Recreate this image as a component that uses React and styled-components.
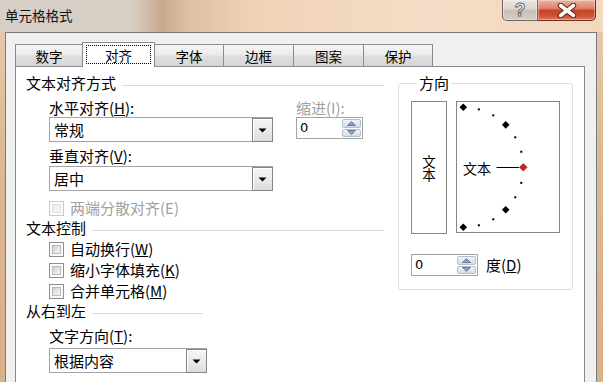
import React from 'react';
import styled, { createGlobalStyle } from 'styled-components';

const Global = createGlobalStyle`
  html, body { margin: 0; padding: 0; background: #e4c4a4; }
  body { font-family: "Noto Sans CJK SC", "Noto Sans", sans-serif; color: #000; }
  * { box-sizing: border-box; }
`;

const Frame = styled.div`
  width: 603px;
  height: 382px;
  overflow: hidden;
  display: flex;
  flex-direction: column;
  background: linear-gradient(180deg, #e8cdb1 0%, #ddb893 40%, #d8b08a 100%);
`;

const TitleBar = styled.div`
  height: 32px;
  flex: none;
  display: flex;
  justify-content: space-between;
  align-items: flex-start;
  background: linear-gradient(90deg, #d6cfc8 0%, #d8cec4 22%, #c9a98b 27%, #dcc0a2 31%, #efd3b8 42%, #f5dcc6 70%, #f3d8bf 100%);
`;

const Title = styled.div`
  padding: 6px 0 0 5px;
  font-size: 13.5px;
  line-height: 18px;
  color: #111;
`;

const Caption = styled.div`
  display: flex;
  margin-right: 7px;
`;

const CapButton = styled.div`
  width: ${p => p.$w}px;
  height: 21px;
  display: flex;
  align-items: center;
  justify-content: center;
  border: 1px solid ${p => (p.$close ? '#6b3224' : '#6e665e')};
  border-top: none;
  border-left: ${p => (p.$close ? 'none' : '1px solid #6e665e')};
  border-radius: ${p => (p.$close ? '0 0 5px 0' : '0 0 0 5px')};
  background: ${p =>
    p.$close
      ? 'linear-gradient(180deg, #eab4a0 0%, #de8266 42%, #c8432a 52%, #cf5436 80%, #e07a58 100%)'
      : 'linear-gradient(180deg, #ece6e0 0%, #ded6ce 45%, #cbc0b5 52%, #d6ccc2 100%)'};
  box-shadow: inset 0 0 0 1px rgba(255, 255, 255, 0.35);
`;

const HelpGlyph = styled.span`
  font-family: "Liberation Sans", Arial, sans-serif;
  font-weight: bold;
  font-size: 18px;
  line-height: 18px;
  color: #fff;
  -webkit-text-stroke: 1px #6a6a6a;
`;

const Dialog = styled.div`
  flex: 1;
  min-height: 0;
  margin: 0 6px 0 5px;
  border: 1px solid #7b7b7b;
  border-bottom: none;
  background: #f0f0f0;
  padding: 9px 11px 0 9px;
  display: flex;
  flex-direction: column;
`;

const TabStrip = styled.div`
  display: flex;
  align-items: flex-end;
  height: 24px;
  flex: none;
  position: relative;
  z-index: 1;
`;

const Tab = styled.div`
  width: ${p => p.$w}px;
  height: ${p => (p.$active ? 25 : 22)}px;
  margin-left: ${p => (p.$first ? 0 : -1)}px;
  margin-bottom: ${p => (p.$active ? -1 : 0)}px;
  position: relative;
  z-index: ${p => (p.$active ? 2 : 1)};
  border: 1px solid #898c95;
  border-bottom: none;
  background: ${p =>
    p.$active ? '#ffffff' : 'linear-gradient(180deg, #f4f4f4 0%, #ececec 45%, #dedede 55%, #d6d6d6 100%)'};
  display: flex;
  justify-content: center;
  align-items: ${p => (p.$active ? 'flex-start' : 'center')};
  font-size: 13.5px;
  line-height: 18px;
`;

const FocusRing = styled.span`
  margin: 2px 3px 0;
  flex: 1;
  height: 19px;
  border: 1px dotted #000;
  display: flex;
  justify-content: center;
  align-items: center;
`;

const Panel = styled.div`
  flex: 1;
  border: 1px solid #898c95;
  border-bottom: none;
  background: #ffffff;
  padding: 7px 0 0 10px;
  display: flex;
  align-items: flex-start;
`;

const LeftCol = styled.div`
  width: 372px;
  padding-right: 14px;
  display: flex;
  flex-direction: column;
`;

const Heading = styled.div`
  display: flex;
  align-items: flex-start;
  gap: 6px;
  height: 18px;
  font-size: 15px;
  line-height: 18px;
  margin-top: ${p => p.$mt || 0}px;
`;

const Rule = styled.span`
  margin-top: 11px;
  height: 1px;
  background: #dadada;
  flex: ${p => (p.$w ? `0 0 ${p.$w}px` : '1')};
`;

const AlignRow = styled.div`
  display: flex;
  gap: 23px;
  margin: 7px 0 0 23px;
`;

const FieldCol = styled.div`
  display: flex;
  flex-direction: column;
`;

const Label = styled.div`
  font-size: 15px;
  line-height: 18px;
  height: 18px;
  white-space: nowrap;
  color: ${p => (p.$disabled ? '#a0a0a0' : '#000')};
  margin-top: ${p => p.$mt || 0}px;
`;

const Combo = styled.div`
  width: ${p => p.$w}px;
  height: 25px;
  margin-top: ${p => p.$mt || 0}px;
  border: 1px solid #a4a4a4;
  background: #fff;
  display: flex;
  align-items: stretch;
`;

const ComboText = styled.div`
  flex: 1;
  padding-left: 4px;
  font-size: 15px;
  line-height: 23px;
`;

const DropButton = styled.div`
  width: 21px;
  margin: 0 -1px -1px 0;
  border: 1px solid #858585;
  background: linear-gradient(180deg, #f5f5f5 0%, #ebebeb 50%, #dcdcdc 100%);
  box-shadow: inset 1px 1px 0 #fff;
  display: flex;
  align-items: center;
  justify-content: center;
`;

const Spin = styled.div`
  width: 67px;
  height: 22px;
  border: 1px solid #a4a4a4;
  background: #fff;
  display: flex;
`;

const SpinText = styled.div`
  flex: 1;
  padding-left: 3px;
  font-family: "DejaVu Sans", sans-serif;
  font-size: 13px;
  line-height: 20px;
`;

const SpinButtons = styled.div`
  width: 20px;
  padding: 1px 1px 1px 0;
  display: flex;
  flex-direction: column;
  gap: 1px;
`;

const SpinHalf = styled.div`
  flex: 1;
  border: 1px solid #b4c0cf;
  border-radius: 2px;
  background: linear-gradient(180deg, #f2f5f9 0%, #e1e8f1 50%, #d3dce8 100%);
  display: flex;
  align-items: center;
  justify-content: center;
`;

const CheckRow = styled.div`
  display: flex;
  align-items: center;
  gap: 6px;
  height: 18px;
  margin: ${p => p.$mt || 0}px 0 0 23px;
  font-size: 15px;
  line-height: 18px;
  color: ${p => (p.$disabled ? '#a0a0a0' : '#000')};
`;

const CheckText = styled.span`
  white-space: nowrap;
`;

const Box = styled.span`
  width: 15px;
  height: 15px;
  flex: none;
  border: 1px solid ${p => (p.$disabled ? '#c9c9c9' : '#8e8f8f')};
  background: #fbfbfb;
  padding: 2px;
  display: flex;
  &::after {
    content: '';
    flex: 1;
    border: 1px solid ${p => (p.$disabled ? '#e2e2e2' : '#b9b9b9')};
    background: ${p =>
      p.$disabled
        ? 'linear-gradient(135deg, #ececec 0%, #f7f7f7 100%)'
        : 'linear-gradient(135deg, #cfcfcf 0%, #e9e9e9 60%, #f6f6f6 100%)'};
  }
`;

const Group = styled.fieldset`
  margin: 0;
  width: 175px;
  border: 1px solid #d5dfe5;
  border-radius: 3px;
  padding: 9px 0 13px 12px;
  display: flex;
  flex-direction: column;
  gap: 20px;
`;

const Legend = styled.legend`
  margin-left: 6px;
  padding: 0 2px;
  font-size: 15px;
  line-height: 18px;
`;

const OrientRow = styled.div`
  display: flex;
  gap: 9px;
  align-items: flex-start;
`;

const VerticalBox = styled.div`
  width: 36px;
  height: 133px;
  border: 1px solid #858585;
  display: flex;
  align-items: center;
  justify-content: center;
`;

const VerticalText = styled.span`
  writing-mode: vertical-rl;
  font-size: 13.5px;
  line-height: 16px;
  margin-top: 2px;
`;

const DialBox = styled.div`
  width: 104px;
  height: 132px;
  border: 1px solid #858585;
  position: relative;
`;

const DialSvg = styled.svg`
  position: absolute;
  inset: 0;
`;

const DialText = styled.span`
  position: absolute;
  left: 6px;
  top: 57px;
  font-size: 14px;
  line-height: 18px;
`;

const DegreeRow = styled.div`
  display: flex;
  align-items: center;
  gap: 8px;
`;

const Triangle = ({ down = true, color = '#000' }) => (
  <svg width="9" height="5" viewBox="0 0 9 5">
    <polygon points={down ? '0.5,0.5 8.5,0.5 4.5,4.5' : '0.5,4.5 8.5,4.5 4.5,0.5'} fill={color} />
  </svg>
);

const SpinArrow = ({ up }) => (
  <svg width="9" height="5" viewBox="0 0 9 5">
    <polygon
      points={up ? '0.5,4.5 8.5,4.5 4.5,0.5' : '0.5,0.5 8.5,0.5 4.5,4.5'}
      fill="#8ea2c6"
      stroke="#56698f"
      strokeWidth="0.8"
      strokeLinejoin="round"
    />
  </svg>
);

const ComboBox = ({ w, mt, value }) => (
  <Combo $w={w} $mt={mt}>
    <ComboText>{value}</ComboText>
    <DropButton>
      <Triangle />
    </DropButton>
  </Combo>
);

const SpinBox = ({ value }) => (
  <Spin>
    <SpinText>{value}</SpinText>
    <SpinButtons>
      <SpinHalf>
        <SpinArrow up />
      </SpinHalf>
      <SpinHalf>
        <SpinArrow />
      </SpinHalf>
    </SpinButtons>
  </Spin>
);

const CheckOption = ({ mt, disabled, children }) => (
  <CheckRow $mt={mt} $disabled={disabled}>
    <Box $disabled={disabled} />
    <CheckText>{children}</CheckText>
  </CheckRow>
);

const Dial = () => {
  const cx = 6.3;
  const cy = 65.3;
  const r = 60;
  const marks = [];
  for (let a = 90; a >= -90; a -= 15) {
    const rad = (a * Math.PI) / 180;
    const x = cx + r * Math.cos(rad);
    const y = cy - r * Math.sin(rad);
    if (a % 45 === 0) {
      const red = a === 0;
      marks.push(
        <polygon
          key={a}
          points={`${x},${y - 3.8} ${x + 3.8},${y} ${x},${y + 3.8} ${x - 3.8},${y}`}
          fill={red ? '#d02020' : '#000'}
          stroke={red ? '#8a1010' : 'none'}
          strokeWidth="0.6"
        />
      );
    } else {
      marks.push(<rect key={a} x={x - 1} y={y - 1} width="2" height="2" fill="#000" />);
    }
  }
  return (
    <DialBox>
      <DialSvg width="102" height="130" viewBox="0 0 102 130">
        <line x1="39.5" y1="65.5" x2="62" y2="65.5" stroke="#000" strokeWidth="1" />
        {marks}
      </DialSvg>
      <DialText>文本</DialText>
    </DialBox>
  );
};

const tabs = [
  { label: '数字', w: 68 },
  { label: '对齐', w: 73, active: true },
  { label: '字体', w: 70 },
  { label: '边框', w: 71 },
  { label: '图案', w: 71 },
  { label: '保护', w: 70 },
];

export default function App() {
  return (
    <>
      <Global />
      <Frame>
        <TitleBar>
          <Title>单元格格式</Title>
          <Caption>
            <CapButton $w={36}>
              <HelpGlyph>?</HelpGlyph>
            </CapButton>
            <CapButton $w={58} $close>
              <svg width="20" height="15" viewBox="0 0 20 15">
                <path d="M3.5 2.5 L16.5 12.5 M16.5 2.5 L3.5 12.5" stroke="#5b2418" strokeWidth="5.5" strokeLinecap="round" />
                <path d="M3.5 2.5 L16.5 12.5 M16.5 2.5 L3.5 12.5" stroke="#fff" strokeWidth="3.5" strokeLinecap="round" />
              </svg>
            </CapButton>
          </Caption>
        </TitleBar>
        <Dialog>
          <TabStrip>
            {tabs.map((t, i) => (
              <Tab key={t.label} $w={t.w} $active={t.active} $first={i === 0}>
                {t.active ? <FocusRing>{t.label}</FocusRing> : t.label}
              </Tab>
            ))}
          </TabStrip>
          <Panel>
            <LeftCol>
              <Heading>
                文本对齐方式
                <Rule />
              </Heading>
              <AlignRow>
                <FieldCol>
                  <Label>
                    水平对齐(<u>H</u>):
                  </Label>
                  <ComboBox w={224} value="常规" />
                  <Label $mt={5}>
                    垂直对齐(<u>V</u>):
                  </Label>
                  <ComboBox w={224} mt={1} value="居中" />
                </FieldCol>
                <FieldCol>
                  <Label $disabled>缩进(I):</Label>
                  <SpinBox value="0" />
                </FieldCol>
              </AlignRow>
              <CheckOption disabled mt={8}>
                两端分散对齐(E)
              </CheckOption>
              <Heading $mt={2}>
                文本控制
                <Rule />
              </Heading>
              <CheckOption mt={3}>
                自动换行(<u>W</u>)
              </CheckOption>
              <CheckOption mt={3}>
                缩小字体填充(<u>K</u>)
              </CheckOption>
              <CheckOption mt={3}>
                合并单元格(<u>M</u>)
              </CheckOption>
              <Heading $mt={2}>
                从右到左
                <Rule $w={111} />
              </Heading>
              <AlignRow>
                <FieldCol>
                  <Label>
                    文字方向(<u>T</u>):
                  </Label>
                  <ComboBox w={158} mt={3} value="根据内容" />
                </FieldCol>
              </AlignRow>
            </LeftCol>
            <Group>
              <Legend>方向</Legend>
              <OrientRow>
                <VerticalBox>
                  <VerticalText>文本</VerticalText>
                </VerticalBox>
                <Dial />
              </OrientRow>
              <DegreeRow>
                <SpinBox value="0" />
                <Label>
                  度(<u>D</u>)
                </Label>
              </DegreeRow>
            </Group>
          </Panel>
        </Dialog>
      </Frame>
    </>
  );
}
